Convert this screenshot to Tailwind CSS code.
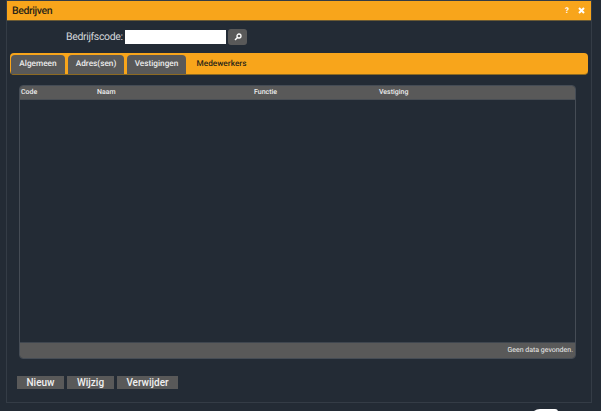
<!DOCTYPE html>
<html lang="en">
<head>
<meta charset="UTF-8">
<title>Bedrijven</title>
<script src="https://cdn.jsdelivr.net/npm/@tailwindcss/browser@4"></script>
</head>
<body class="relative w-[601px] h-[411px] overflow-hidden bg-[#232b35] font-['Roboto',sans-serif] [text-rendering:geometricPrecision]">
  <div class="ml-[6px] w-[586px] h-[403px] border border-[#343c46] flex flex-col">
    <!-- title bar -->
    <div class="h-[20px] bg-[#f8a51b] border-b border-[#6b5a33] flex items-center justify-between pl-[5px] pr-[6px] shrink-0">
      <span class="text-[10.5px] tracking-[-0.4px] leading-[20px] font-medium text-[#2b2618]">Bedrijven</span>
      <div class="flex items-center gap-[9px]">
        <span class="text-[8px] font-bold text-white leading-none">?</span>
        <svg width="7" height="7" viewBox="0 0 7 7"><path d="M1 1l5 5M6 1l-5 5" stroke="#fff" stroke-width="2"/></svg>
      </div>
    </div>
    <!-- search -->
    <div class="flex items-center h-[16px] mt-[8px] pl-[59px]">
      <span class="w-[59px] text-[10.5px] tracking-[-0.35px] leading-[16px] text-[#d5d8db]">Bedrijfscode:</span>
      <div class="w-[101px] h-[14px] bg-white"></div>
      <button class="ml-[2px] w-[19px] h-[16px] rounded-[3px] bg-[#595959] flex items-center justify-center">
        <svg width="8" height="8" viewBox="0 0 8 8"><circle cx="5" cy="3" r="2" fill="none" stroke="#fff" stroke-width="1.3"/><path d="M3.5 4.5L1 7" stroke="#fff" stroke-width="1.5"/></svg>
      </button>
    </div>
    <!-- tabs -->
    <div class="mt-[8px] ml-[3px] w-[578px] h-[22px] rounded-[4px] bg-[#f8a51b] border-b border-[#8d6a22] flex items-end pl-px gap-[3px]">
      <div class="w-[54px] h-[19px] rounded-t-[4px] bg-[#595959] flex items-center justify-center text-[8.25px] font-medium text-[#ececec]">Algemeen</div>
      <div class="w-[56px] h-[19px] rounded-t-[4px] bg-[#595959] flex items-center justify-center text-[8.25px] font-medium text-[#ececec]">Adres(sen)</div>
      <div class="w-[59px] h-[19px] rounded-t-[4px] bg-[#595959] flex items-center justify-center text-[8.25px] font-medium text-[#ececec]">Vestigingen</div>
      <div class="w-[69px] -ml-[2px] h-[19px] flex items-center justify-center text-[8.25px] font-medium text-[#2b2618]">Medewerkers</div>
    </div>
    <!-- table -->
    <div class="mt-[10px] ml-[12px] w-[557px] h-[274px] rounded-[4px] border border-[#454c55] flex flex-col overflow-hidden">
      <div class="h-[14px] bg-[#595959] border-b border-[#4a4f55] flex items-center text-[7px] font-medium text-[#ececec] shrink-0">
        <span class="w-[77px] pl-px">Code</span>
        <span class="w-[157px]">Naam</span>
        <span class="w-[125px]">Functie</span>
        <span>Vestiging</span>
      </div>
      <div class="flex-1"></div>
      <div class="h-[16px] bg-[#595959] border-t border-[#3f464f] flex items-center justify-end pr-[2px] text-[7px] text-[#ececec] shrink-0">Geen data gevonden.</div>
    </div>
    <!-- actions -->
    <div class="mt-[17px] ml-[10px] flex gap-[3px]">
      <button class="w-[47px] h-[13px] bg-[#595959] flex items-center justify-center text-[10px] font-medium text-[#f0f0f0]">Nieuw</button>
      <button class="w-[47px] h-[13px] bg-[#595959] flex items-center justify-center text-[10px] font-medium text-[#f0f0f0]">Wijzig</button>
      <button class="w-[61px] h-[13px] bg-[#595959] flex items-center justify-center text-[10px] font-medium text-[#f0f0f0]">Verwijder</button>
    </div>
  </div>
  <!-- cut-off shape under the window -->
  <div class="absolute left-[530px] top-[409px] w-[28px] h-[10px] rounded-tl-[14px] rounded-tr-[4px] bg-white"></div>
</body>
</html>
